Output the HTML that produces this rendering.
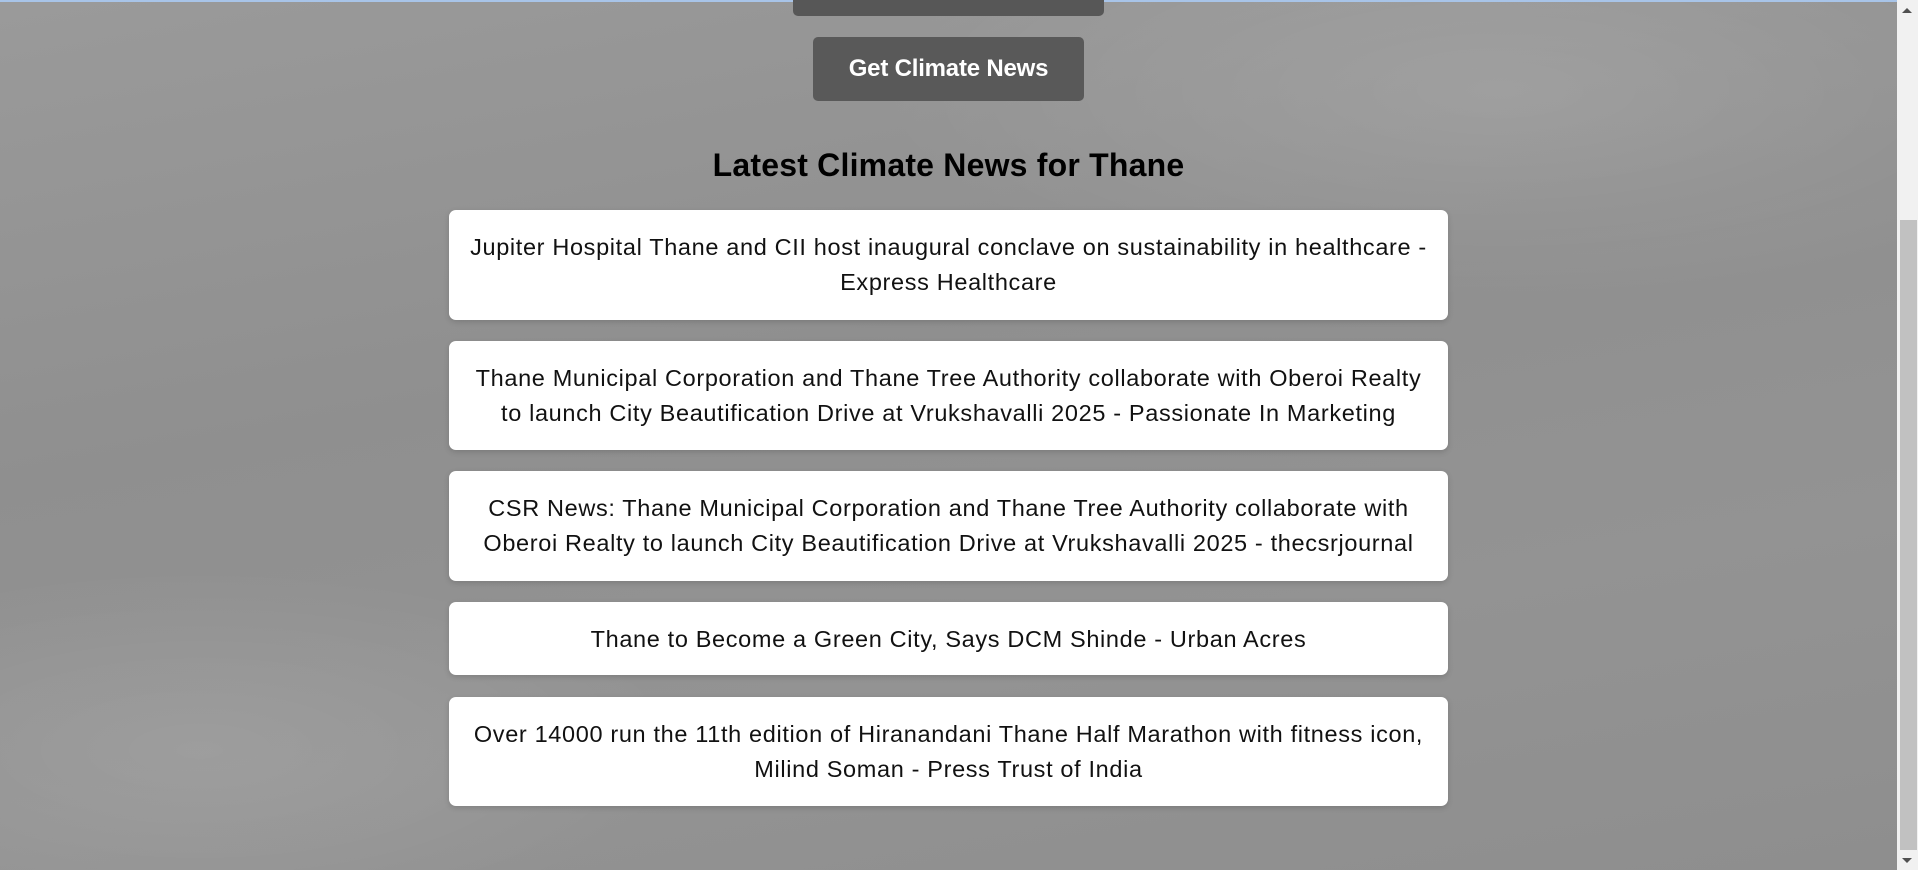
<!DOCTYPE html>
<html><head><meta charset="utf-8"><style>
html,body{margin:0;padding:0;width:1918px;height:870px;overflow:hidden}
body{font-family:"Liberation Sans",sans-serif;position:relative;
background:
radial-gradient(ellipse 900px 300px at 1500px 90px, rgba(255,255,255,0.12), transparent 70%),
radial-gradient(ellipse 700px 260px at 200px 750px, rgba(255,255,255,0.10), transparent 70%),
linear-gradient(170deg,#9a9a9a 0%,#8f8f8f 40%,#939393 70%,#8e8e8e 100%);}
.topline{position:absolute;left:0;top:0;width:1918px;height:2px;background:#a8c4e8}
.topbox{position:absolute;left:793px;top:-10px;width:311px;height:26px;background:#575757;border-radius:5px}
.btn{position:absolute;left:813px;top:37px;width:271px;height:64px;background:#595959;border-radius:5px;color:#fff;font-weight:bold;font-size:24px;line-height:64px;text-align:center;letter-spacing:-0.2px}
h2{position:absolute;left:0;width:1897px;top:147px;margin:0;text-align:center;font-size:32px;font-weight:bold;color:#000;letter-spacing:0.2px}
.card{position:absolute;left:449px;width:999px;background:#fff;border-radius:7px;box-shadow:0 2px 6px rgba(0,0,0,0.15);text-align:center;font-size:23.5px;line-height:35px;color:#111;white-space:nowrap;letter-spacing:0.65px;box-sizing:border-box;padding-top:20px}
.sb{position:absolute;left:1897px;top:0;width:21px;height:870px;background:#f1f1f1}
.th{position:absolute;left:1900px;top:220px;width:17px;height:630px;background:#c1c1c1}
.up,.dn{position:absolute;left:1902px;width:0;height:0;border-left:5px solid transparent;border-right:5px solid transparent}
.up{top:8px;border-bottom:5px solid #505050}
.dn{top:858px;border-top:5px solid #505050}
</style></head><body>
<div class="topline"></div>
<div class="topbox"></div>
<div class="btn">Get Climate News</div>
<h2>Latest Climate News for Thane</h2>
<div class="card" style="top:210px;height:110px">Jupiter Hospital Thane and CII host inaugural conclave on sustainability in healthcare -<br>Express Healthcare</div>
<div class="card" style="top:341px;height:109px">Thane Municipal Corporation and Thane Tree Authority collaborate with Oberoi Realty<br>to launch City Beautification Drive at Vrukshavalli 2025 - Passionate In Marketing</div>
<div class="card" style="top:471px;height:110px">CSR News: Thane Municipal Corporation and Thane Tree Authority collaborate with<br>Oberoi Realty to launch City Beautification Drive at Vrukshavalli 2025 - thecsrjournal</div>
<div class="card" style="top:602px;height:73px">Thane to Become a Green City, Says DCM Shinde - Urban Acres</div>
<div class="card" style="top:697px;height:109px">Over 14000 run the 11th edition of Hiranandani Thane Half Marathon with fitness icon,<br>Milind Soman - Press Trust of India</div>
<div class="sb"></div><div class="th"></div><div class="up"></div><div class="dn"></div>
</body></html>
